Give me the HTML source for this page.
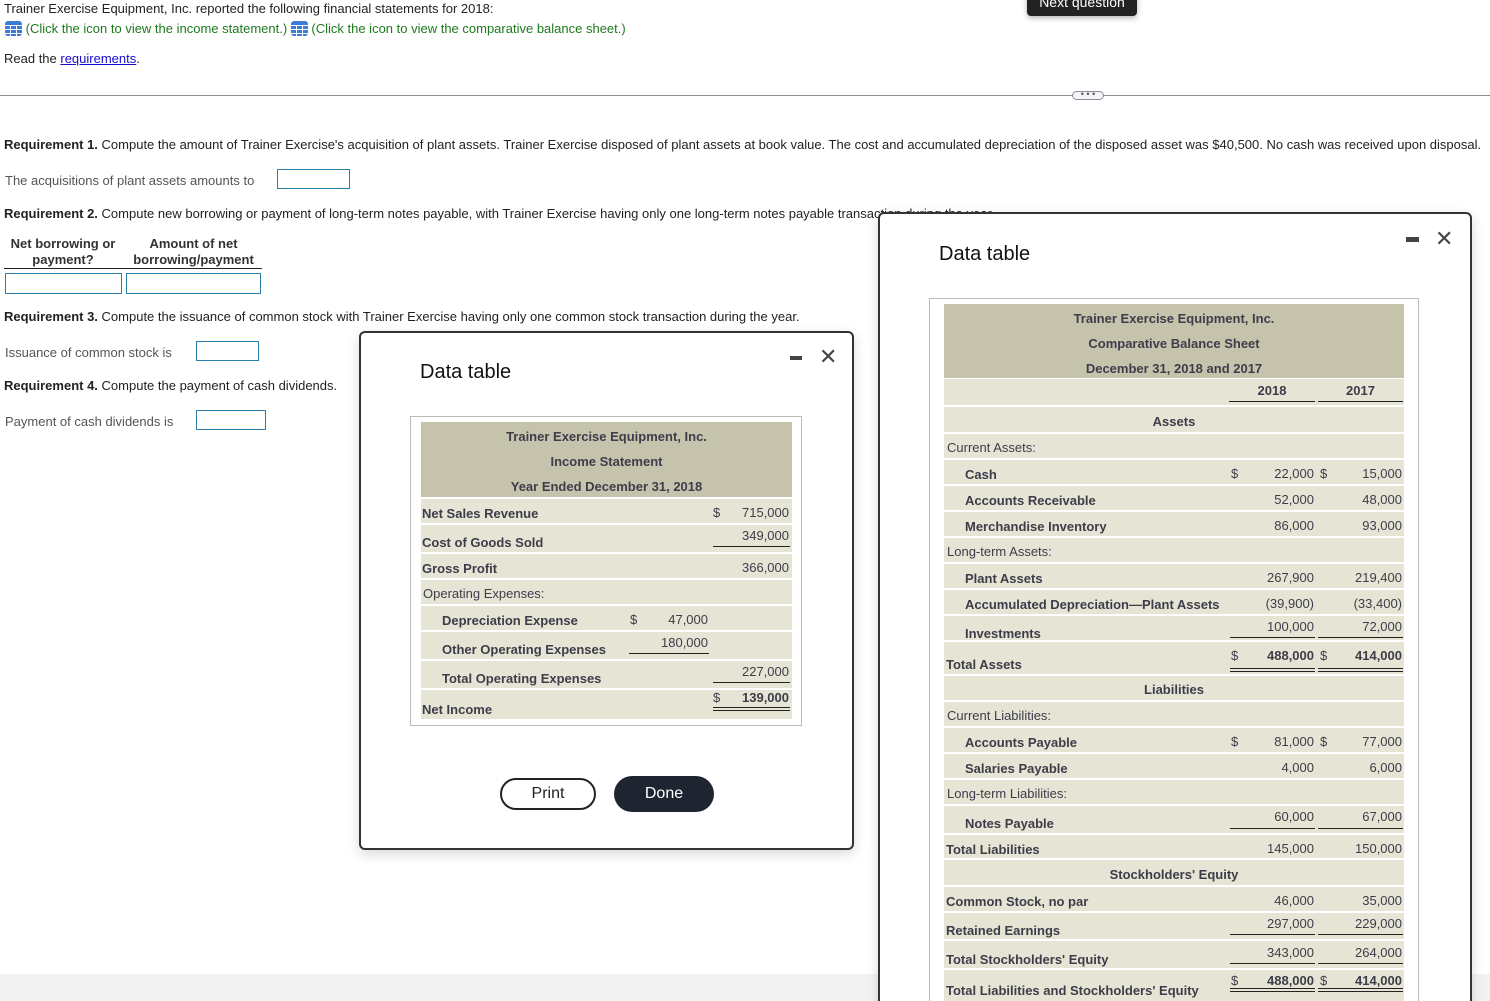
<!DOCTYPE html>
<html><head><meta charset="utf-8"><style>
*{margin:0;padding:0;box-sizing:border-box}
html,body{width:1490px;height:1001px;overflow:hidden;background:#fff}
body{position:relative;font-family:"Liberation Sans",Arial,sans-serif;font-size:13px;color:#222}
.t{position:absolute;white-space:nowrap;line-height:16px;height:16px;margin-top:1px}
.b{font-weight:bold}
.g{color:#555}
.tb{color:#3d3d4a;font-size:13px}
.row{position:absolute;background:#e6e4d4}
.hd{position:absolute;background:#c6c3ad}
.ul{position:absolute;height:1px;background:#222}
.inp{position:absolute;border:1px solid #2a7fa8;background:#fff}
.grid{display:inline-block;width:17px;height:15px;background:#3a7bd5;border-radius:3px;vertical-align:-3px;position:relative}
.grid i{position:absolute;background:#fff}
</style></head><body>

<div class="t" style="left:4px;top:0px">Trainer Exercise Equipment, Inc. reported the following financial statements for 2018:</div>
<div class="t" style="left:5px;top:20px;color:#1e7a1e"><span class="grid"><i style="left:0;top:4px;width:17px;height:1px"></i><i style="left:0;top:8px;width:17px;height:1px"></i><i style="left:0;top:12px;width:17px;height:1px"></i><i style="left:5px;top:4px;width:1px;height:11px"></i><i style="left:11px;top:4px;width:1px;height:11px"></i></span> (Click the icon to view the income statement.) <span class="grid"><i style="left:0;top:4px;width:17px;height:1px"></i><i style="left:0;top:8px;width:17px;height:1px"></i><i style="left:0;top:12px;width:17px;height:1px"></i><i style="left:5px;top:4px;width:1px;height:11px"></i><i style="left:11px;top:4px;width:1px;height:11px"></i></span> (Click the icon to view the comparative balance sheet.)</div>
<div class="t" style="left:4px;top:50px">Read the <span style="color:#1a0dcc;text-decoration:underline">requirements</span>.</div>

<div style="position:absolute;left:1027px;top:-10px;width:110px;height:26px;background:#222;border-radius:4px;color:#fff;font-size:14px;text-align:center;line-height:24px;box-shadow:0 2px 6px rgba(0,0,0,.3)">Next question</div>
<div style="position:absolute;left:0;top:95px;width:1490px;height:1px;background:#8a8f99"></div>
<div style="position:absolute;left:1072px;top:91px;width:32px;height:9px;border:1px solid #8a8f99;border-radius:5px;background:#f4f5f7;font-size:9px;line-height:5px;text-align:center;color:#555">• • •</div>

<div class="t" style="left:4px;top:136px"><b>Requirement 1.</b> Compute the amount of Trainer Exercise's acquisition of plant assets. Trainer Exercise disposed of plant assets at book value. The cost and accumulated depreciation of the disposed asset was $40,500. No cash was received upon disposal.</div>
<div class="t g" style="left:5px;top:172px">The acquisitions of plant assets amounts to</div>
<div class="inp" style="left:277px;top:169px;width:73px;height:20px"></div>
<div class="t" style="left:4px;top:205px"><b>Requirement 2.</b> Compute new borrowing or payment of long-term notes payable, with Trainer Exercise having only one long-term notes payable transaction during the year.</div>
<div class="t b" style="left:4px;top:235px;width:118px;text-align:center;color:#333">Net borrowing or</div>
<div class="t b" style="left:4px;top:251px;width:118px;text-align:center;color:#333">payment?</div>
<div class="t b" style="left:126px;top:235px;width:135px;text-align:center;color:#333">Amount of net</div>
<div class="t b" style="left:126px;top:251px;width:135px;text-align:center;color:#333">borrowing/payment</div>
<div class="ul" style="left:4px;top:268px;width:258px"></div>
<div class="inp" style="left:5px;top:273px;width:117px;height:21px"></div>
<div class="inp" style="left:126px;top:273px;width:135px;height:21px"></div>
<div class="t" style="left:4px;top:308px"><b>Requirement 3.</b> Compute the issuance of common stock with Trainer Exercise having only one common stock transaction during the year.</div>
<div class="t g" style="left:5px;top:344px">Issuance of common stock is</div>
<div class="inp" style="left:196px;top:341px;width:63px;height:20px"></div>
<div class="t" style="left:4px;top:377px"><b>Requirement 4.</b> Compute the payment of cash dividends.</div>
<div class="t g" style="left:5px;top:413px">Payment of cash dividends is</div>
<div class="inp" style="left:196px;top:410px;width:70px;height:20px"></div>

<div style="position:absolute;left:0;top:974px;width:1490px;height:27px;background:#f2f2f2"></div>

<!-- Modal 1 -->
<div style="position:absolute;left:359px;top:331px;width:495px;height:519px;border:2px solid #333;border-radius:6px;background:#fff;box-shadow:0 4px 12px rgba(0,0,0,.15)"></div>
<div class="t" style="left:420px;top:360px;font-size:20px;line-height:22px;height:22px;color:#111">Data table</div>
<div style="position:absolute;left:790px;top:356px;width:12px;height:4px;background:#444"></div>
<div class="t" style="left:819px;top:345px;font-size:22px;line-height:22px;height:22px;color:#444">✕</div>
<div style="position:absolute;left:410px;top:416px;width:392px;height:310px;border:1px solid #bbb"></div>
<div class="hd" style="left:421px;top:422px;width:371px;height:75px"></div>
<div class="t b tb" style="left:421px;top:428px;width:371px;text-align:center">Trainer Exercise Equipment, Inc.</div>
<div class="t b tb" style="left:421px;top:453px;width:371px;text-align:center">Income Statement</div>
<div class="t b tb" style="left:421px;top:478px;width:371px;text-align:center">Year Ended December 31, 2018</div>

<div class="row" style="left:421px;top:499px;width:371px;height:24px"></div>
<div class="row" style="left:421px;top:525px;width:371px;height:27px"></div>
<div class="row" style="left:421px;top:554px;width:371px;height:24px"></div>
<div class="row" style="left:421px;top:580px;width:371px;height:24px"></div>
<div class="row" style="left:421px;top:606px;width:371px;height:24px"></div>
<div class="row" style="left:421px;top:632px;width:371px;height:27px"></div>
<div class="row" style="left:421px;top:661px;width:371px;height:27px"></div>
<div class="row" style="left:421px;top:690px;width:371px;height:29px"></div>

<div class="t b tb" style="left:422px;top:505px">Net Sales Revenue</div>
<div class="t tb" style="left:713px;top:504px">$</div>
<div class="t tb" style="right:701px;top:504px">715,000</div>
<div class="t b tb" style="left:422px;top:534px">Cost of Goods Sold</div>
<div class="t tb" style="right:701px;top:527px">349,000</div>
<div class="ul" style="left:713px;top:546px;width:77px"></div>
<div class="t b tb" style="left:422px;top:560px">Gross Profit</div>
<div class="t tb" style="right:701px;top:559px">366,000</div>
<div class="t tb" style="left:423px;top:585px">Operating Expenses:</div>
<div class="t b tb" style="left:442px;top:612px">Depreciation Expense</div>
<div class="t tb" style="left:630px;top:611px">$</div>
<div class="t tb" style="right:782px;top:611px">47,000</div>
<div class="t b tb" style="left:442px;top:641px">Other Operating Expenses</div>
<div class="t tb" style="right:782px;top:634px">180,000</div>
<div class="ul" style="left:629px;top:653px;width:80px"></div>
<div class="t b tb" style="left:442px;top:670px">Total Operating Expenses</div>
<div class="t tb" style="right:701px;top:663px">227,000</div>
<div class="ul" style="left:713px;top:682px;width:77px"></div>
<div class="t b tb" style="left:422px;top:701px">Net Income</div>
<div class="t tb" style="left:713px;top:689px">$</div>
<div class="t b tb" style="right:701px;top:689px">139,000</div>
<div class="ul" style="left:713px;top:707px;width:77px"></div>
<div class="ul" style="left:713px;top:710px;width:77px"></div>

<div style="position:absolute;left:500px;top:778px;width:96px;height:32px;border:2px solid #222;border-radius:16px;text-align:center;line-height:28px;font-size:16px;color:#222">Print</div>
<div style="position:absolute;left:614px;top:776px;width:100px;height:36px;background:#1e2430;border-radius:18px;text-align:center;line-height:36px;font-size:16px;color:#fff">Done</div>

<!-- Modal 2 -->
<div style="position:absolute;left:878px;top:212px;width:594px;height:800px;border:2px solid #333;border-radius:6px;background:#fff;box-shadow:0 4px 12px rgba(0,0,0,.15)"></div>
<div class="t" style="left:939px;top:242px;font-size:20px;line-height:22px;height:22px;color:#111">Data table</div>
<div style="position:absolute;left:1406px;top:237px;width:13px;height:5px;background:#444"></div>
<div class="t" style="left:1435px;top:227px;font-size:22px;line-height:22px;height:22px;color:#444">✕</div>
<div style="position:absolute;left:929px;top:298px;width:490px;height:720px;border:1px solid #bbb"></div>
<div class="hd" style="left:944px;top:304px;width:460px;height:74px"></div>
<div class="t b tb" style="left:944px;top:310px;width:460px;text-align:center">Trainer Exercise Equipment, Inc.</div>
<div class="t b tb" style="left:944px;top:335px;width:460px;text-align:center">Comparative Balance Sheet</div>
<div class="t b tb" style="left:944px;top:360px;width:460px;text-align:center">December 31, 2018 and 2017</div>

<div class="row" style="left:944px;top:379px;width:460px;height:26px"></div>
<div class="row" style="left:944px;top:407px;width:460px;height:25px"></div>
<div class="row" style="left:944px;top:434px;width:460px;height:24px"></div>
<div class="row" style="left:944px;top:460px;width:460px;height:24px"></div>
<div class="row" style="left:944px;top:486px;width:460px;height:24px"></div>
<div class="row" style="left:944px;top:512px;width:460px;height:24px"></div>
<div class="row" style="left:944px;top:538px;width:460px;height:24px"></div>
<div class="row" style="left:944px;top:564px;width:460px;height:24px"></div>
<div class="row" style="left:944px;top:590px;width:460px;height:24px"></div>
<div class="row" style="left:944px;top:616px;width:460px;height:24px"></div>
<div class="row" style="left:944px;top:642px;width:460px;height:32px"></div>
<div class="row" style="left:944px;top:676px;width:460px;height:24px"></div>
<div class="row" style="left:944px;top:702px;width:460px;height:24px"></div>
<div class="row" style="left:944px;top:728px;width:460px;height:24px"></div>
<div class="row" style="left:944px;top:754px;width:460px;height:24px"></div>
<div class="row" style="left:944px;top:780px;width:460px;height:24px"></div>
<div class="row" style="left:944px;top:806px;width:460px;height:27px"></div>
<div class="row" style="left:944px;top:835px;width:460px;height:23px"></div>
<div class="row" style="left:944px;top:860px;width:460px;height:25px"></div>
<div class="row" style="left:944px;top:887px;width:460px;height:24px"></div>
<div class="row" style="left:944px;top:913px;width:460px;height:26px"></div>
<div class="row" style="left:944px;top:941px;width:460px;height:27px"></div>
<div class="row" style="left:944px;top:970px;width:460px;height:31px"></div>

<div class="t b tb" style="left:1229px;top:382px;width:86px;text-align:center">2018</div>
<div class="t b tb" style="left:1318px;top:382px;width:85px;text-align:center">2017</div>
<div class="ul" style="left:1229px;top:401px;width:86px"></div>
<div class="ul" style="left:1318px;top:401px;width:85px"></div>
<div class="t b tb" style="left:944px;top:413px;width:460px;text-align:center">Assets</div>
<div class="t tb" style="left:947px;top:439px">Current Assets:</div>

<div class="t b tb" style="left:965px;top:466px">Cash</div>
<div class="t tb" style="left:1231px;top:465px">$</div>
<div class="t tb" style="right:176px;top:465px">22,000</div>
<div class="t tb" style="left:1320px;top:465px">$</div>
<div class="t tb" style="right:88px;top:465px">15,000</div>

<div class="t b tb" style="left:965px;top:492px">Accounts Receivable</div>
<div class="t tb" style="right:176px;top:491px">52,000</div>
<div class="t tb" style="right:88px;top:491px">48,000</div>

<div class="t b tb" style="left:965px;top:518px">Merchandise Inventory</div>
<div class="t tb" style="right:176px;top:517px">86,000</div>
<div class="t tb" style="right:88px;top:517px">93,000</div>

<div class="t tb" style="left:947px;top:543px">Long-term Assets:</div>

<div class="t b tb" style="left:965px;top:570px">Plant Assets</div>
<div class="t tb" style="right:176px;top:569px">267,900</div>
<div class="t tb" style="right:88px;top:569px">219,400</div>

<div class="t b tb" style="left:965px;top:596px">Accumulated Depreciation—Plant Assets</div>
<div class="t tb" style="right:176px;top:595px">(39,900)</div>
<div class="t tb" style="right:88px;top:595px">(33,400)</div>

<div class="t b tb" style="left:965px;top:625px">Investments</div>
<div class="t tb" style="right:176px;top:618px">100,000</div>
<div class="t tb" style="right:88px;top:618px">72,000</div>
<div class="ul" style="left:1230px;top:637px;width:85px"></div>
<div class="ul" style="left:1318px;top:637px;width:85px"></div>

<div class="t b tb" style="left:946px;top:656px">Total Assets</div>
<div class="t tb" style="left:1231px;top:647px">$</div>
<div class="t b tb" style="right:176px;top:647px">488,000</div>
<div class="t tb" style="left:1320px;top:647px">$</div>
<div class="t b tb" style="right:88px;top:647px">414,000</div>
<div class="ul" style="left:1230px;top:668px;width:85px"></div>
<div class="ul" style="left:1230px;top:671px;width:85px"></div>
<div class="ul" style="left:1318px;top:668px;width:85px"></div>
<div class="ul" style="left:1318px;top:671px;width:85px"></div>

<div class="t b tb" style="left:944px;top:681px;width:460px;text-align:center">Liabilities</div>
<div class="t tb" style="left:947px;top:707px">Current Liabilities:</div>

<div class="t b tb" style="left:965px;top:734px">Accounts Payable</div>
<div class="t tb" style="left:1231px;top:733px">$</div>
<div class="t tb" style="right:176px;top:733px">81,000</div>
<div class="t tb" style="left:1320px;top:733px">$</div>
<div class="t tb" style="right:88px;top:733px">77,000</div>

<div class="t b tb" style="left:965px;top:760px">Salaries Payable</div>
<div class="t tb" style="right:176px;top:759px">4,000</div>
<div class="t tb" style="right:88px;top:759px">6,000</div>

<div class="t tb" style="left:947px;top:785px">Long-term Liabilities:</div>

<div class="t b tb" style="left:965px;top:815px">Notes Payable</div>
<div class="t tb" style="right:176px;top:808px">60,000</div>
<div class="t tb" style="right:88px;top:808px">67,000</div>
<div class="ul" style="left:1230px;top:828px;width:85px"></div>
<div class="ul" style="left:1318px;top:828px;width:85px"></div>

<div class="t b tb" style="left:946px;top:841px">Total Liabilities</div>
<div class="t tb" style="right:176px;top:840px">145,000</div>
<div class="t tb" style="right:88px;top:840px">150,000</div>

<div class="t b tb" style="left:944px;top:866px;width:460px;text-align:center">Stockholders' Equity</div>

<div class="t b tb" style="left:946px;top:893px">Common Stock, no par</div>
<div class="t tb" style="right:176px;top:892px">46,000</div>
<div class="t tb" style="right:88px;top:892px">35,000</div>

<div class="t b tb" style="left:946px;top:922px">Retained Earnings</div>
<div class="t tb" style="right:176px;top:915px">297,000</div>
<div class="t tb" style="right:88px;top:915px">229,000</div>
<div class="ul" style="left:1230px;top:934px;width:85px"></div>
<div class="ul" style="left:1318px;top:934px;width:85px"></div>

<div class="t b tb" style="left:946px;top:951px">Total Stockholders' Equity</div>
<div class="t tb" style="right:176px;top:944px">343,000</div>
<div class="t tb" style="right:88px;top:944px">264,000</div>
<div class="ul" style="left:1230px;top:963px;width:85px"></div>
<div class="ul" style="left:1318px;top:963px;width:85px"></div>

<div class="t b tb" style="left:946px;top:982px">Total Liabilities and Stockholders' Equity</div>
<div class="t tb" style="left:1231px;top:972px">$</div>
<div class="t b tb" style="right:176px;top:972px">488,000</div>
<div class="t tb" style="left:1320px;top:972px">$</div>
<div class="t b tb" style="right:88px;top:972px">414,000</div>
<div class="ul" style="left:1230px;top:988px;width:85px"></div>
<div class="ul" style="left:1230px;top:991px;width:85px"></div>
<div class="ul" style="left:1318px;top:988px;width:85px"></div>
<div class="ul" style="left:1318px;top:991px;width:85px"></div>

</body></html>
